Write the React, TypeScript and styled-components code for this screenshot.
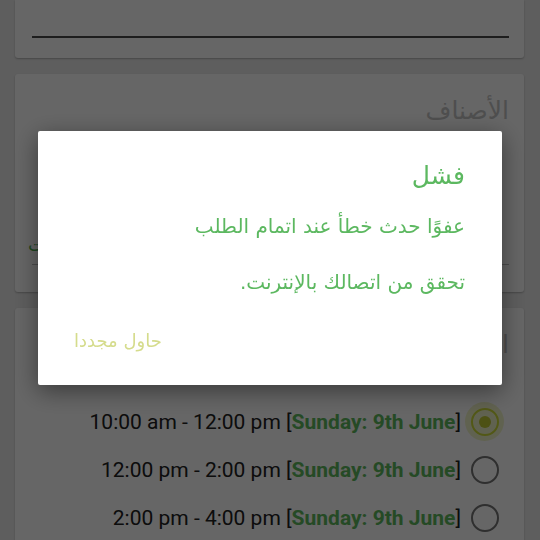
import React from "react";
import styled, { createGlobalStyle } from "styled-components";

const GlobalStyle = createGlobalStyle`
  html, body { margin: 0; padding: 0; background: #ebebeb; overflow: hidden; }
  body { font-family: Roboto, "DejaVu Sans", sans-serif; }
  * { box-sizing: border-box; }
`;

const Page = styled.div`
  width: 540px;
  height: 540px;
  overflow: hidden;
  padding: 0 16px 0 15px;
  display: flex;
  flex-direction: column;
  gap: 16px;
  background: #ebebeb;
`;

const Card = styled.div<{ $h: number; $flatTop?: boolean }>`
  height: ${(p) => p.$h}px;
  flex: none;
  background: #ffffff;
  border-radius: ${(p) => (p.$flatTop ? "0 0 3px 3px" : "3px")};
  box-shadow: 0 1px 2px rgba(0, 0, 0, 0.25);
  padding: 0 15px 0 17px;
  display: flex;
  flex-direction: column;
  direction: rtl;
  overflow: hidden;
`;

const Underline = styled.div<{ $top: number }>`
  margin-top: ${(p) => p.$top}px;
  height: 2px;
  background: #4a4a4a;
`;

const CardTitle = styled.div`
  margin-top: 20px;
  font-family: "DejaVu Sans", sans-serif;
  font-size: 25px;
  line-height: 34px;
  color: #c4c4c4;
  text-align: right;
`;

const InputRow = styled.div`
  margin-top: 96px;
  height: 40px;
  display: flex;
  align-items: center;
  justify-content: flex-end;
  font-family: "DejaVu Sans", sans-serif;
  font-size: 18px;
  color: #4caf50;
  margin-left: -4px;
`;

const InputLine = styled.div`
  height: 1px;
  background: #bdbdbd;
`;

const SlotList = styled.div`
  margin-top: 45px;
  display: flex;
  flex-direction: column;
  gap: 18px;
  direction: ltr;
  align-items: flex-end;
  padding-right: 10px;
`;

const SlotRow = styled.div`
  display: flex;
  align-items: center;
  gap: 10px;
  height: 30px;
`;

const SlotText = styled.span`
  font-family: Roboto, sans-serif;
  font-size: 21px;
  color: #212121;
  white-space: nowrap;
`;

const SlotDay = styled.b`
  color: #5cb85c;
  font-weight: 700;
`;

const RadioOuter = styled.span<{ $checked: boolean }>`
  position: relative;
  width: 28px;
  height: 28px;
  border-radius: 50%;
  border: 2.5px solid ${(p) => (p.$checked ? "#cddc39" : "#757575")};
  display: flex;
  align-items: center;
  justify-content: center;
  flex: none;
  &::before {
    content: "";
    display: ${(p) => (p.$checked ? "block" : "none")};
    position: absolute;
    left: -8px;
    top: -8px;
    width: 39px;
    height: 39px;
    border-radius: 50%;
    background: rgba(205, 220, 57, 0.28);
  }
`;

const RadioDot = styled.span`
  width: 12px;
  height: 12px;
  border-radius: 50%;
  background: #c0ca33;
  position: relative;
`;

const Overlay = styled.div`
  position: fixed;
  inset: 0;
  background: rgba(0, 0, 0, 0.6);
`;

const Dialog = styled.div`
  position: fixed;
  left: 38px;
  top: 131px;
  width: 464px;
  height: 254px;
  background: #ffffff;
  border-radius: 2px;
  box-shadow: 0 6px 24px rgba(0, 0, 0, 0.45);
  padding: 29px 37px 0 36px;
  display: flex;
  flex-direction: column;
  direction: rtl;
  font-family: "DejaVu Sans", sans-serif;
`;

const DialogTitle = styled.div`
  font-size: 25px;
  line-height: 32px;
  color: #5cb860;
`;

const DialogMessage = styled.div`
  margin-top: 20px;
  font-size: 20px;
  line-height: 28px;
  color: #5cb860;
  white-space: pre-line;
`;

const DialogActions = styled.div`
  margin-top: 33px;
  display: flex;
  justify-content: flex-end;
`;

const DialogButton = styled.button`
  border: none;
  background: transparent;
  padding: 0;
  font-family: "DejaVu Sans", sans-serif;
  font-size: 18px;
  line-height: 24px;
  color: #d5dc8c;
`;

const slots = [
  { time: "10:00 am - 12:00 pm", checked: true },
  { time: "12:00 pm - 2:00 pm", checked: false },
  { time: "2:00 pm - 4:00 pm", checked: false },
];

export default function App() {
  return (
    <>
      <GlobalStyle />
      <Page>
        <Card $h={58} $flatTop>
          <Underline $top={36} />
        </Card>
        <Card $h={218}>
          <CardTitle>الأصناف</CardTitle>
          <InputRow>منتجات</InputRow>
          <InputLine />
        </Card>
        <Card $h={260}>
          <CardTitle>المواعيد المتاحة</CardTitle>
          <SlotList>
            {slots.map((s) => (
              <SlotRow key={s.time}>
                <SlotText>
                  {s.time} [<SlotDay>Sunday: 9th June</SlotDay>]
                </SlotText>
                <RadioOuter $checked={s.checked}>{s.checked && <RadioDot />}</RadioOuter>
              </SlotRow>
            ))}
          </SlotList>
        </Card>
      </Page>
      <Overlay />
      <Dialog>
        <DialogTitle>فشل</DialogTitle>
        <DialogMessage>{"عفوًا حدث خطأ عند اتمام الطلب\n\nتحقق من اتصالك بالإنترنت."}</DialogMessage>
        <DialogActions>
          <DialogButton>حاول مجددا</DialogButton>
        </DialogActions>
      </Dialog>
    </>
  );
}
